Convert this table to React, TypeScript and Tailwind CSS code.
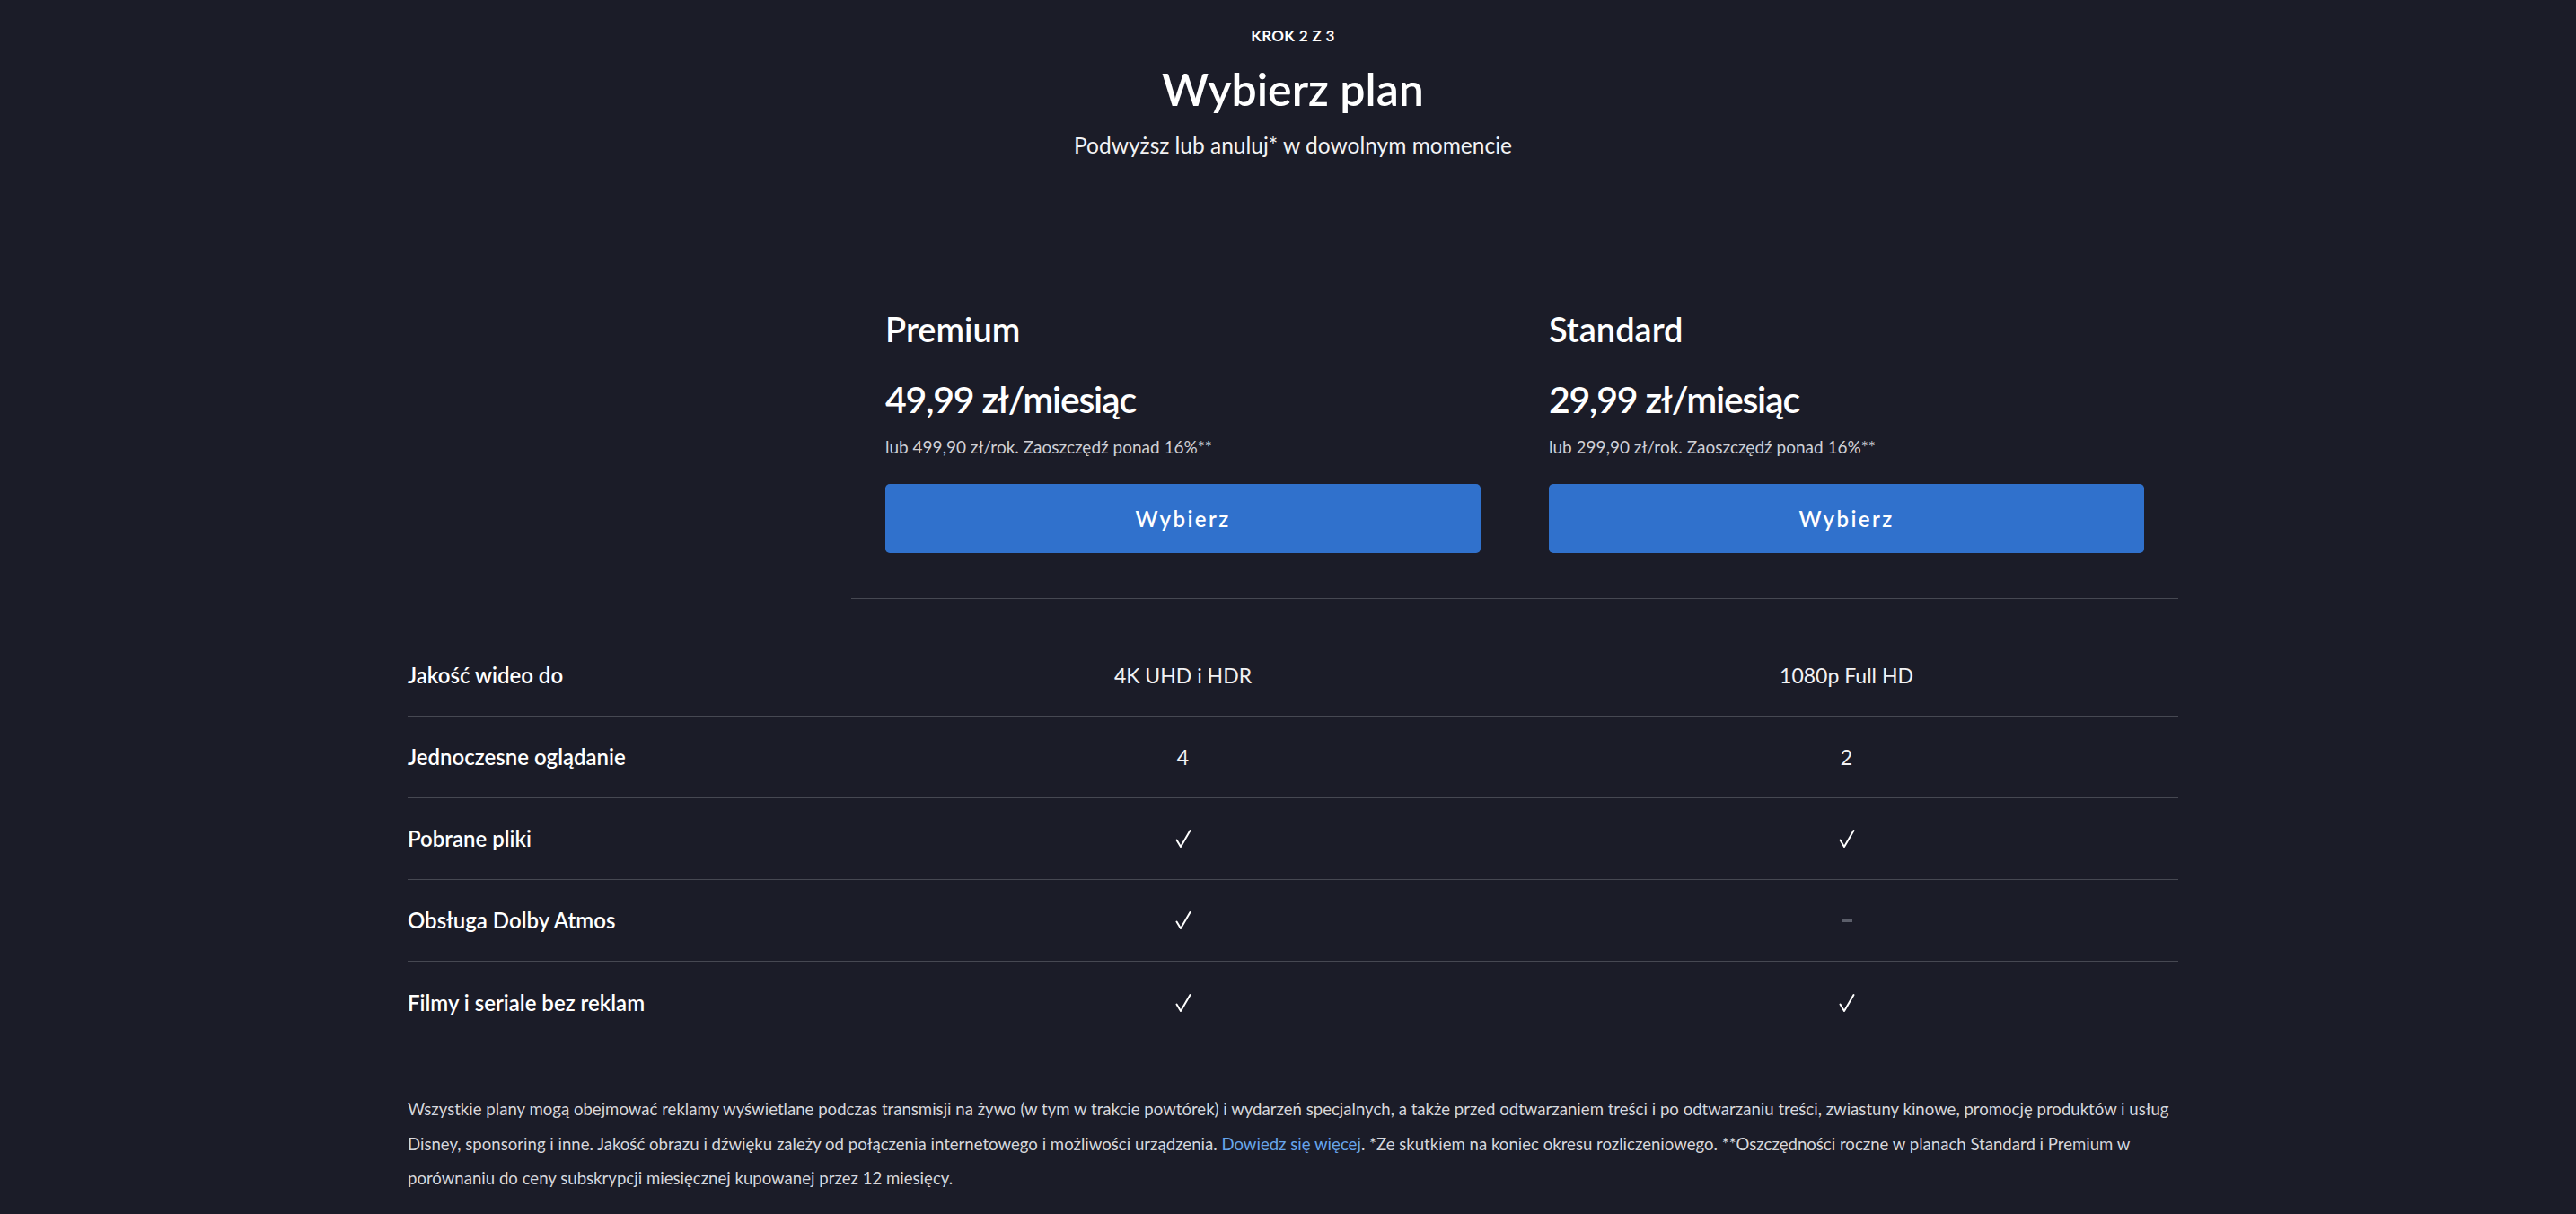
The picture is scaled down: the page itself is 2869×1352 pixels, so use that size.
const plans = [
  {
    name: "Premium",
    price: "49,99 zł/miesiąc",
    yearly: "lub 499,90 zł/rok. Zaoszczędź ponad 16%**",
  },
  {
    name: "Standard",
    price: "29,99 zł/miesiąc",
    yearly: "lub 299,90 zł/rok. Zaoszczędź ponad 16%**",
  },
];

type Cell = string | boolean;

const features: { label: string; values: Cell[] }[] = [
  { label: "Jakość wideo do", values: ["4K UHD i HDR", "1080p Full HD"] },
  { label: "Jednoczesne oglądanie", values: ["4", "2"] },
  { label: "Pobrane pliki", values: [true, true] },
  { label: "Obsługa Dolby Atmos", values: [true, false] },
  { label: "Filmy i seriale bez reklam", values: [true, true] },
];

function Check() {
  return (
    <svg width="20" height="22" viewBox="0 0 20 22" fill="none">
      <path
        d="M2.5 12.5 L7 20 L17.5 2"
        stroke="white"
        strokeWidth="2"
        strokeLinecap="round"
        strokeLinejoin="round"
      />
    </svg>
  );
}

function Value({ v }: { v: Cell }) {
  if (v === true) return <Check />;
  if (v === false) return <div className="h-[3px] w-[12px] bg-[#5b5e6a]" />;
  return <span className="text-[23px] leading-[30px] text-[#f2f2f4]">{v}</span>;
}

export default function App() {
  return (
    <div className="min-h-[1352px] bg-[#1b1c28] font-['Lato','Liberation_Sans',sans-serif] text-white">
      <div className="ml-[454px] w-[1972px] pt-[28px]">
        <header className="flex flex-col items-center">
          <div className="text-[17px] font-bold uppercase leading-[24px] tracking-[0.02em]">
            Krok 2 z 3
          </div>
          <h1 className="mt-[17px] text-[50px] font-semibold leading-[60px]">
            Wybierz plan
          </h1>
          <p className="mt-[17px] text-[24.5px] leading-[32px] text-[#f2f2f4]">
            Podwyższ lub anuluj* w dowolnym momencie
          </p>
        </header>

        <section className="mt-[165px] grid grid-cols-[494px_1478px]">
          <div />
          <div className="grid grid-cols-2 border-b border-[#464852] pb-[50px]">
            {plans.map((p) => (
              <div key={p.name} className="flex flex-col px-[38px]">
                <h2 className="text-[38px] font-semibold leading-[46px]">{p.name}</h2>
                <div className="mt-[28px] text-[41px] font-semibold leading-[56px] tracking-[-0.03em]">
                  {p.price}
                </div>
                <div className="mt-[12px] text-[19px] leading-[26px] text-[#cfd0d6]">
                  {p.yearly}
                </div>
                <button className="mt-[28px] h-[77px] w-full rounded-[5px] bg-[#3071cc] text-[24px] font-semibold tracking-[0.1em] text-white">
                  Wybierz
                </button>
              </div>
            ))}
          </div>
        </section>

        <section className="mt-[40px]">
          {features.map((f, i) => (
            <div
              key={f.label}
              className={
                "grid h-[91px] grid-cols-[494px_739px_739px] items-center" +
                (i < features.length - 1 ? " border-b border-[#464852]" : "")
              }
            >
              <div className="text-[24px] font-semibold leading-[30px]">{f.label}</div>
              {f.values.map((v, j) => (
                <div key={j} className="flex items-center justify-center">
                  <Value v={v} />
                </div>
              ))}
            </div>
          ))}
        </section>

        <p className="mt-[54px] text-[18.6px] leading-[38.5px] text-[#d6d7dc]">
          Wszystkie plany mogą obejmować reklamy wyświetlane podczas transmisji na żywo (w tym w
          trakcie powtórek) i wydarzeń specjalnych, a także przed odtwarzaniem treści i po
          odtwarzaniu treści, zwiastuny kinowe, promocję produktów i usług Disney, sponsoring i
          inne. Jakość obrazu i dźwięku zależy od połączenia internetowego i możliwości urządzenia.{" "}
          <a className="text-[#67a5ec]">Dowiedz się więcej</a>. *Ze skutkiem na koniec okresu
          rozliczeniowego. **Oszczędności roczne w planach Standard i Premium w porównaniu do ceny
          subskrypcji miesięcznej kupowanej przez 12 miesięcy.
        </p>
      </div>
    </div>
  );
}
